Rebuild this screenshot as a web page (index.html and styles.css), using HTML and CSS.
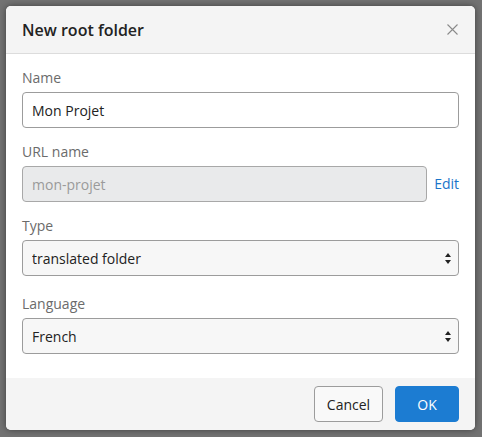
FILE: index.html
```html
<!DOCTYPE html>
<html>
<head>
<meta charset="utf-8">
<link rel="stylesheet" href="styles.css">
</head>
<body>
<div class="dialog">
  <div class="dialog-header">
    <h1 class="dialog-title">New root folder</h1>
    <button class="close-btn" aria-label="Close">
      <svg width="11" height="11" viewBox="0 0 11 11"><path d="M0.5 0.5 L10.5 10.5 M10.5 0.5 L0.5 10.5" stroke="#8a8a8a" stroke-width="1.1" fill="none"/></svg>
    </button>
  </div>
  <div class="dialog-body">
    <div class="field">
      <label class="field-label">Name</label>
      <input class="text-input" type="text" value="Mon Projet">
    </div>
    <div class="field">
      <label class="field-label">URL name</label>
      <div class="input-row">
        <input class="text-input text-input--disabled" type="text" value="mon-projet" disabled>
        <a class="edit-link" href="#">Edit</a>
      </div>
    </div>
    <div class="field field--select">
      <label class="field-label">Type</label>
      <div class="select-wrap">
        <select class="select-input"><option>translated folder</option></select>
        <svg class="select-arrows" width="8" height="13" viewBox="0 0 8 13"><path d="M4 1 L7 5 L1 5 Z M1 8 L7 8 L4 12 Z" fill="#222"/></svg>
      </div>
    </div>
    <div class="field field--last">
      <label class="field-label">Language</label>
      <div class="select-wrap">
        <select class="select-input"><option>French</option></select>
        <svg class="select-arrows" width="8" height="13" viewBox="0 0 8 13"><path d="M4 1 L7 5 L1 5 Z M1 8 L7 8 L4 12 Z" fill="#222"/></svg>
      </div>
    </div>
  </div>
  <div class="dialog-footer">
    <button class="btn btn--default">Cancel</button>
    <button class="btn btn--primary">OK</button>
  </div>
</div>
</body>
</html>
```
FILE: styles.css
```css
html, body {
  margin: 0;
  padding: 0;
}
body {
  background: #727272;
  font-family: "Open Sans", "Liberation Sans", sans-serif;
  font-size: 14px;
  color: #222;
  padding: 6px;
  width: 482px;
  height: 437px;
  box-sizing: border-box;
}
.dialog {
  width: 469px;
  height: 424px;
  background: #fff;
  border-radius: 5px;
  box-shadow: 0 0 6px rgba(0, 0, 0, 0.45);
  display: flex;
  flex-direction: column;
  overflow: hidden;
}
.dialog-header {
  height: 47px;
  background: #f4f4f4;
  border-bottom: 1px solid #dcdcdc;
  display: flex;
  align-items: center;
  justify-content: space-between;
  padding: 0 16px;
}
.dialog-title {
  margin: 0;
  font-size: 16px;
  font-weight: 600;
  color: #222;
  line-height: 20px;
}
.close-btn {
  border: 0;
  background: none;
  padding: 0;
  margin-right: 1px;
  display: flex;
  cursor: pointer;
}
.dialog-body {
  flex: 1;
  padding: 14px 16px 0;
}
.field {
  display: flex;
  flex-direction: column;
  margin-bottom: 14px;
}
.field--select {
  margin-bottom: 18px;
}
.field--last {
  margin-bottom: 0;
}
.field-label {
  line-height: 20px;
  color: #6b6b6b;
  margin-bottom: 4px;
}
.text-input, .select-input {
  box-sizing: border-box;
  height: 36px;
  width: 100%;
  border: 1px solid #9c9c9c;
  border-radius: 4px;
  padding: 0 9px;
  font-family: inherit;
  font-size: 14px;
  color: #222;
  background: #fff;
  outline: none;
}
.input-row {
  display: flex;
  align-items: center;
  gap: 7px;
}
.text-input--disabled {
  flex: 1;
  background: #e9eaeb;
  color: #9a9a9a;
  border-color: #a8a8a8;
}
.edit-link {
  color: #1a74c9;
  text-decoration: none;
  line-height: 20px;
}
.select-wrap {
  position: relative;
}
.select-input {
  appearance: none;
  -webkit-appearance: none;
  background: #f7f7f7;
  display: block;
}
.select-arrows {
  position: absolute;
  right: 7px;
  top: 12px;
}
.dialog-footer {
  height: 52px;
  box-sizing: border-box;
  background: #f4f4f4;
  display: flex;
  align-items: center;
  justify-content: flex-end;
  gap: 12px;
  padding: 0 16px;
}
.btn {
  height: 36px;
  box-sizing: border-box;
  border-radius: 4px;
  font-family: inherit;
  font-size: 14px;
  cursor: pointer;
}
.btn--default {
  width: 69px;
  background: #f9f9f9;
  border: 1px solid #9c9c9c;
  color: #222;
}
.btn--primary {
  width: 64px;
  background: #1c7cd2;
  border: 1px solid #1c7cd2;
  color: #fff;
}
```
